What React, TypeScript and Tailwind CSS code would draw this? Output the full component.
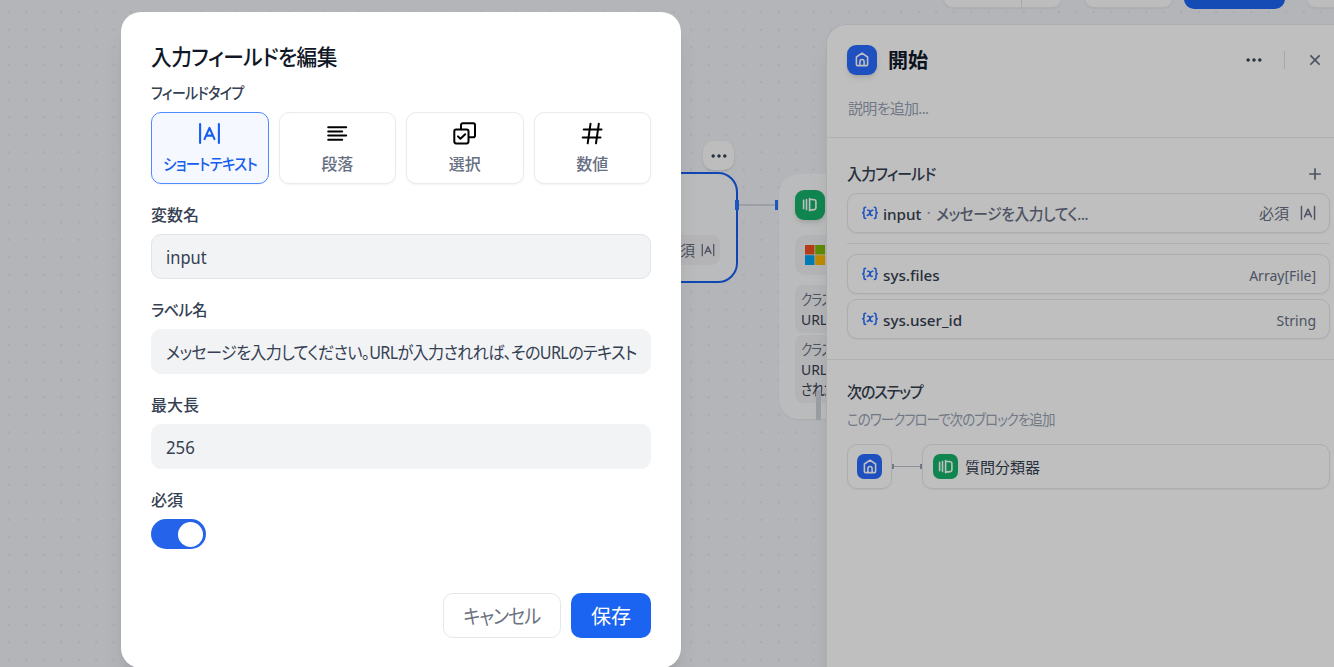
import type { ReactNode } from "react";
import { clsx } from "clsx";
import { RiAddLine, RiCloseLine, RiMoreFill } from "react-icons/ri";

type IconProps = { className?: string };

function ShortTextIcon({ className }: IconProps) {
  return (
    <svg viewBox="0 0 24 24" fill="none" stroke="currentColor" strokeWidth="2.2" strokeLinecap="round" strokeLinejoin="round" className={className}>
      <path d="M2.2 2.2v19.6M21.8 2.2v19.6M6.8 17.8 12 6.200l5.200 11.600M8.600 14.200h6.800" />
    </svg>
  );
}

function ParagraphIcon({ className }: IconProps) {
  return (
    <svg viewBox="0 0 25 25" fill="none" stroke="currentColor" strokeWidth="2" strokeLinecap="round" className={className}>
      <path d="M3.200 6.200h18M3.200 10.500h14M3.200 14.500h18M3.200 18.800h14" />
    </svg>
  );
}

function SelectIcon({ className }: IconProps) {
  return (
    <svg viewBox="0 0 25 25" fill="none" stroke="currentColor" strokeWidth="2" strokeLinecap="round" strokeLinejoin="round" className={className}>
      <rect x="2.3" y="8.6" width="14.2" height="13.8" rx="1.8" />
      <path d="M9 8.3V4a1.8 1.8 0 0 1 1.8-1.8h10.4A1.8 1.8 0 0 1 23 4v10.4a1.8 1.8 0 0 1-1.8 1.8h-4" />
      <path d="m6 15.4 2.4 2.4 4.8-4.6" />
    </svg>
  );
}

function NumberIcon({ className }: IconProps) {
  return (
    <svg viewBox="0 0 25 25" fill="none" stroke="currentColor" strokeWidth="2" strokeLinecap="round" className={className}>
      <path d="M3.700 8.400h17.800M2.700 16.400h17.800M10.500 2.800 7.700 22.300M18.800 2.800 16 22.300" />
    </svg>
  );
}

function HomeIcon({ className }: IconProps) {
  return (
    <svg viewBox="0 0 20 20" fill="none" stroke="currentColor" strokeWidth="1.6" strokeLinejoin="round" className={className}>
      <path d="M4.4 7 10 3.200l5.600 3.800v7.400a1.200 1.200 0 0 1-1.200 1.200H5.600a1.200 1.200 0 0 1-1.200-1.200V7Z" />
      <path d="M7.900 15.600v-4a2.100 2.100 0 0 1 4.200 0v4" />
    </svg>
  );
}

function ClassifierIcon({ className }: IconProps) {
  return (
    <svg viewBox="0 0 20 20" fill="none" stroke="currentColor" strokeWidth="1.6" strokeLinecap="round" strokeLinejoin="round" className={className}>
      <path d="M3.600 5.200v8.600M6.500 4.600v10M9.600 3.600v12.200M9.600 4.300l4.800.5c.9.1 1.500.7 1.500 1.500v6.800c0 .8-.6 1.400-1.500 1.500l-4.800.5" />
    </svg>
  );
}

function VariableIcon() {
  return (
    <svg viewBox="0 0 16 14" fill="none" stroke="currentColor" strokeWidth="1.6" strokeLinecap="round" className="h-[14px] w-4 text-[#2970ff]">
      <path d="M3.600 1.200c-1.200 0-1.600.5-1.600 1.500v2.200c0 1-.4 1.600-1.200 1.900.8.3 1.200.9 1.200 1.900v2.200c0 1 .4 1.500 1.600 1.500M12.400 1.200c1.200 0 1.600.5 1.600 1.500v2.200c0 1 .4 1.600 1.200 1.900-.8.3-1.200.9-1.200 1.900v2.200c0 1-.4 1.500-1.600 1.500" />
      <path d="M5.800 4.300c1.600-.4 1.800.4 2.200 2.400.4 2.200.8 3 2.200 2.600M10.800 4.200C9 4 8.800 5.500 8 6.800 7.200 8.200 6.700 9.700 5.200 9.300" />
    </svg>
  );
}

function WindowsLogo() {
  return (
    <svg viewBox="0 0 20 20" className="size-5">
      <path fill="#f25022" d="M0 0h9.500v9.500H0z" />
      <path fill="#7fba00" d="M10.200 0H20v9.500h-9.800z" />
      <path fill="#00a4ef" d="M0 10.200h9.500V20H0z" />
      <path fill="#ffb900" d="M10.200 10.200H20V20h-9.800z" />
    </svg>
  );
}

const FIELD_TYPES = [
  { label: "ショートテキスト", icon: ShortTextIcon, text: "scale-x-90 tracking-[-0.8px]" },
  { label: "段落", icon: ParagraphIcon, text: "" },
  { label: "選択", icon: SelectIcon, text: "" },
  { label: "数値", icon: NumberIcon, text: "" },
];

function Field({ label, text, children }: { label: string; text?: string; children: ReactNode }) {
  return (
    <div>
      <div className="flex h-[38px] items-center">
        <span className={clsx("origin-left text-[16px] leading-none font-medium whitespace-nowrap text-[#354052]", text)}>
          {label}
        </span>
      </div>
      {children}
    </div>
  );
}

function TextInput({ value, active, text }: { value: string; active?: boolean; text?: string }) {
  return (
    <div
      className={clsx(
        "flex h-[45px] items-center overflow-hidden rounded-[10px] border bg-[#f2f3f5] px-[14px] pt-0.5",
        active ? "border-[#e1e4ea]" : "border-[#f2f3f5]"
      )}
    >
      <span className={clsx("origin-left text-[17.5px] whitespace-nowrap text-[#354052]", text)}>{value}</span>
    </div>
  );
}

function EditFieldModal() {
  return (
    <div className="mt-3 ml-[121px] h-[656px] w-[560px] rounded-[20px] bg-white px-[30px] pt-[30px] shadow-xl">
      <h1 className="mb-0.5 flex h-[30px] origin-left scale-x-[0.94] items-center pb-px text-[22px] font-medium tracking-[-0.5px] whitespace-nowrap text-[#101828]">
        入力フィールドを編集
      </h1>
      <div className="space-y-3">
        <Field label="フィールドタイプ" text="scale-x-[0.87] tracking-[-0.6px]">
          <div className="grid grid-cols-4 gap-[10px]">
            {FIELD_TYPES.map(({ label, icon: Icon, text }, i) => (
              <div
                key={label}
                className={clsx(
                  "flex h-[72px] flex-col items-center rounded-[10px] border pt-2 shadow-xs",
                  i === 0 ? "border-[#528bff] bg-[#f5f8ff] text-[#155eef]" : "border-[#e9ebf0] bg-white text-black"
                )}
              >
                <Icon className={i === 0 ? "my-[1px] size-[23px]" : "size-[25px]"} />
                <span
                  className={clsx(
                    "mt-[10px] text-[16px] leading-none font-medium whitespace-nowrap",
                    i === 0 ? "text-[#155eef]" : "text-[#676f83]",
                    text
                  )}
                >
                  {label}
                </span>
              </div>
            ))}
          </div>
        </Field>
        <Field label="変数名">
          <TextInput value="input" active text="scale-x-[0.94]" />
        </Field>
        <Field label="ラベル名" text="scale-x-[0.95] tracking-[-0.6px]">
          <TextInput
            value="メッセージを入力してください。URLが入力されれば、そのURLのテキスト"
            text="scale-x-[0.92] tracking-[-0.7px]"
          />
        </Field>
        <Field label="最大長">
          <TextInput value="256" text="scale-x-[0.96]" />
        </Field>
        <Field label="必須">
          <div className="flex h-[30px] w-[55px] items-center justify-end rounded-full bg-[#2563eb] pr-[3px]">
            <div className="size-[25px] rounded-full bg-white" />
          </div>
        </Field>
      </div>
      <div className="mt-11 flex justify-end gap-[10px]">
        <div className="flex h-[45px] w-[118px] items-center justify-center rounded-[10px] border border-[#e4e7ec] pt-0.5">
          <span className="scale-x-90 text-[20px] tracking-[-1px] whitespace-nowrap text-[#6b7280]">キャンセル</span>
        </div>
        <div className="flex h-[45px] w-20 items-center justify-center rounded-[10px] bg-[#1b64f2] pt-0.5 text-[20px] text-white">
          保存
        </div>
      </div>
    </div>
  );
}

function VariableRow({ name, children, right }: { name: string; children?: ReactNode; right: ReactNode }) {
  return (
    <div className="flex h-10 items-center rounded-[10px] border border-[#e4e7ec] bg-white pr-[13px] pl-[14px] shadow-xs">
      <VariableIcon />
      <span className="ml-[5px] pt-0.5 text-[15.200px] font-medium text-[#354052]">{name}</span>
      {children}
      <div className="ml-auto flex items-center gap-[11px] text-[#676f83]">{right}</div>
    </div>
  );
}

function StartPanel() {
  return (
    <div className="relative ml-[826px] mt-[15px] h-[660px] w-[525px] rounded-tl-[20px] border-t border-l border-[#e4e7ec] bg-white shadow-xl">
      <div className="h-[113px] border-b border-[#ebedf0] pt-5 pl-5">
        <div className="flex h-[30px] w-[478px] items-center">
          <div className="grid size-[30px] place-items-center rounded-[9px] bg-[#296dff] text-white shadow-md">
            <HomeIcon className="size-5" />
          </div>
          <span className="ml-[11px] pt-0.5 text-[20px] font-semibold text-[#101828]">開始</span>
          <RiMoreFill className="ml-auto size-5 text-[#354052]" />
          <div className="mx-5 h-[18px] w-px bg-[#dfe1e6]" />
          <RiCloseLine className="size-5 text-[#676f83]" />
        </div>
        <div className="mt-[26px] ml-px text-[15px] leading-none tracking-[-0.7px] text-[#98a2b3]">説明を追加...</div>
      </div>
      <div className="h-[221px] w-[503px] pt-[26px] pl-5">
        <div className="flex h-5 items-center justify-between pr-[5px]">
          <span className="origin-left scale-x-[0.93] text-[16px] font-medium tracking-[-0.8px] whitespace-nowrap text-[#354052]">
            入力フィールド
          </span>
          <RiAddLine className="size-5 text-[#676f83]" />
        </div>
        <div className="mt-[9px]">
          <VariableRow
            name="input"
            right={
              <>
                <span className="text-[15px]">必須</span>
                <ShortTextIcon className="size-4" />
              </>
            }
          >
            <span className="mx-[5px] text-[#98a2b3]">·</span>
            <span className="origin-left scale-x-[0.92] pt-0.5 text-[16px] font-medium tracking-[-0.4px] whitespace-nowrap text-[#676f83]">
              メッセージを入力してく...
            </span>
          </VariableRow>
        </div>
        <div className="my-[10px] h-px bg-[#ebedf0]" />
        <div className="flex flex-col gap-[5px]">
          <VariableRow name="sys.files" right={<span className="pt-0.5 text-[14px]">Array[File]</span>} />
          <VariableRow name="sys.user_id" right={<span className="pt-0.5 text-[14px]">String</span>} />
        </div>
      </div>
      <div className="border-t border-[#ebedf0] pt-[23px] pl-5">
        <div className="origin-left scale-x-[0.94] text-[16px] leading-[18px] font-medium tracking-[-1.2px] text-[#354052]">
          次のステップ
        </div>
        <div className="mt-[9px] origin-left scale-x-90 text-[15px] leading-[18px] tracking-[-1.1px] text-[#98a2b3]">
          このワークフローで次のブロックを追加
        </div>
        <div className="mt-4 flex w-[483px] items-center">
          <div className="grid size-[45px] place-items-center rounded-[10px] border border-[#e4e7ec] shadow-xs">
            <div className="grid size-[25px] place-items-center rounded-[7px] bg-[#296dff] text-white">
              <HomeIcon className="size-5" />
            </div>
          </div>
          <div className="h-[5px] w-[2px] bg-[#98a2b3]" />
          <div className="h-px w-[26px] bg-[#bcc1cc]" />
          <div className="h-[5px] w-[2px] bg-[#98a2b3]" />
          <div className="flex h-[45px] flex-1 items-center rounded-[10px] border border-[#e4e7ec] pl-[10px] shadow-xs">
            <div className="grid size-[25px] place-items-center rounded-[7px] bg-[#17b26a] text-white">
              <ClassifierIcon className="size-5" />
            </div>
            <span className="ml-[7px] pt-px text-[15px] text-[#354052]">質問分類器</span>
          </div>
        </div>
      </div>
    </div>
  );
}

function CanvasNodes() {
  return (
    <>
      <div className="absolute top-[141px] left-[703px] grid h-[29px] w-[31px] place-items-center rounded-[10px] bg-[#fcfcfd] text-[#354052] shadow-sm">
        <RiMoreFill className="size-5" />
      </div>
      <div className="absolute top-[172px] left-[438px] flex h-[111px] w-[300px] flex-col justify-end rounded-[20px] border-2 border-[#155eef] bg-[#f9fafb] px-4 pb-4">
        <div className="flex h-[30px] items-center justify-end gap-[6px] rounded-lg bg-[#f0f1f3] pr-[5px] text-[15px] text-[#676f83]">
          必須
          <ShortTextIcon className="size-[14px]" />
        </div>
      </div>
      <div className="absolute top-[204px] left-[738px] h-[2px] w-[40px] bg-[#d0d5dc]" />
      <div className="absolute top-[200px] left-[735px] h-[10px] w-1 bg-[#2970ff]" />
      <div className="absolute top-[174px] left-[779px] h-[245px] w-[300px] rounded-[20px] bg-[#f9fafb] px-[15.500px] pt-4 shadow-xs">
        <div className="grid size-[30px] place-items-center rounded-[9px] bg-[#17b26a] text-white shadow-md">
          <ClassifierIcon className="size-5" />
        </div>
        <div className="mt-[15px] flex h-10 items-center rounded-[10px] bg-[#f0f1f3] pl-[10px]">
          <WindowsLogo />
        </div>
        <div className="mt-[10px] h-12 rounded-lg bg-[#f0f1f3] pt-1 pl-[6px] text-[15px] leading-5 text-[#354052]">
          <div className="origin-left scale-x-[0.82] tracking-[-0.7px] text-[#676f83]">クラス 1</div>
          <div className="origin-left scale-x-[0.93]">URLが</div>
        </div>
        <div className="mt-[2px] h-[68px] rounded-lg bg-[#f0f1f3] pt-1 pl-[6px] text-[15px] leading-5 text-[#354052]">
          <div className="origin-left scale-x-[0.82] tracking-[-0.7px] text-[#676f83]">クラス 2</div>
          <div className="origin-left scale-x-[0.93]">URLが</div>
          <div className="origin-left scale-x-[0.85] tracking-[-0.7px]">された</div>
        </div>
      </div>
      <div className="absolute top-[200px] left-[775px] h-[10px] w-[3px] bg-[#2970ff]" />
      <div className="absolute top-[390px] left-[816px] h-[30px] w-[5px] rounded-t-full bg-[#d0d5dc]" />
    </>
  );
}

function TopBar() {
  return (
    <div className="relative -mt-9 flex h-[45px] items-start pl-[943px]">
      <div className="flex h-11 w-[119px] shrink-0 rounded-[10px] border border-[#e9ebf0] bg-[#fcfcfd] shadow-xs">
        <div className="h-full w-[78px] border-r border-[#dfe1e6]" />
      </div>
      <div className="ml-[22px] h-11 w-[89px] shrink-0 rounded-[10px] border border-[#e9ebf0] bg-[#fcfcfd] shadow-xs" />
      <div className="ml-[11px] h-[45px] w-[101px] shrink-0 rounded-[10px] bg-[#1b64f2]" />
      <div className="ml-[21px] h-11 w-10 shrink-0 rounded-[10px] border border-[#e9ebf0] bg-[#fcfcfd] shadow-xs" />
    </div>
  );
}

export default function App() {
  return (
    <div className="relative flow-root h-[667px] w-[1334px] overflow-hidden bg-[#f0f2f7] bg-[radial-gradient(circle,#e0e2e8_1px,transparent_1.5px)] bg-size-[17.5px_17.5px] bg-position-[0px_3.5px] font-['Noto_Sans','Noto_Sans_CJK_JP',sans-serif] [font-feature-settings:'palt']">
      <CanvasNodes />
      <TopBar />
      <StartPanel />
      <div className="absolute inset-0 flow-root bg-black/25">
        <EditFieldModal />
      </div>
    </div>
  );
}
